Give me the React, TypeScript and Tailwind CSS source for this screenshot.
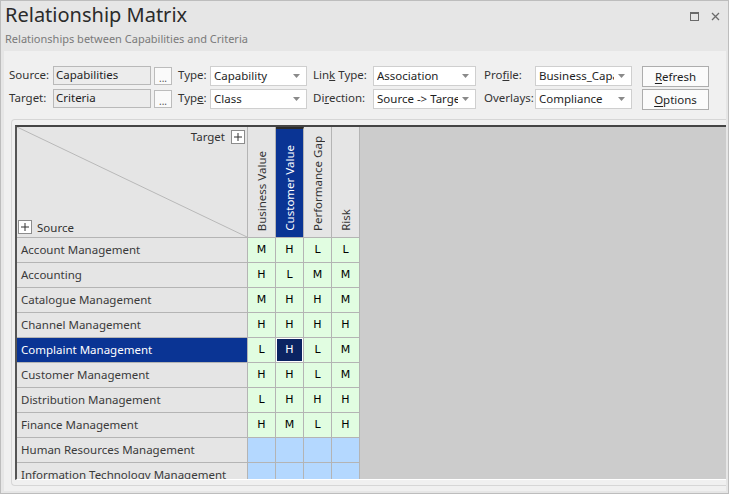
import React from "react";

type Row = { name: string; vals: string[] | null; selected?: boolean };

const rows: Row[] = [
  { name: "Account Management", vals: ["M", "H", "L", "L"] },
  { name: "Accounting", vals: ["H", "L", "M", "M"] },
  { name: "Catalogue Management", vals: ["M", "H", "H", "M"] },
  { name: "Channel Management", vals: ["H", "H", "H", "H"] },
  { name: "Complaint Management", vals: ["L", "H", "L", "M"], selected: true },
  { name: "Customer Management", vals: ["H", "H", "L", "M"] },
  { name: "Distribution Management", vals: ["L", "H", "H", "H"] },
  { name: "Finance Management", vals: ["H", "M", "L", "H"] },
  { name: "Human Resources Management", vals: null },
  { name: "Information Technology Management", vals: null },
];

const columns = ["Business Value", "Customer Value", "Performance Gap", "Risk"];

function Combo({ value, w }: { value: string; w: string }) {
  return (
    <div className={`${w} h-[20px] bg-white border border-[#cfcfcf] flex items-center pl-[3px] pr-[6px] gap-1`}>
      <span className="flex-1 overflow-hidden whitespace-nowrap text-[11.5px] text-[#1e1e1e]">{value}</span>
      <svg width="7" height="4" viewBox="0 0 7 4">
        <path d="M0 0h7L3.5 4z" fill="#8a8a8a" />
      </svg>
    </div>
  );
}

function Field({ value }: { value: string }) {
  return (
    <div className="w-[98px] h-[19px] bg-[#ececec] border border-[#b9b9b9] pl-[2px] text-[11.5px] leading-[15px] text-[#1e1e1e]">
      {value}
    </div>
  );
}

function Dots() {
  return (
    <div className="ml-[3px] w-[18px] h-[18px] mt-[1px] bg-[#fafafa] border border-[#bcbcbc] flex items-end justify-center text-[10px] leading-[12px] text-[#555]">
      ...
    </div>
  );
}

function Btn({ first, rest }: { first: string; rest: string }) {
  return (
    <div className="ml-[10px] w-[67px] h-[21px] bg-[#fbfbfb] border border-[#adadad] flex items-center justify-center text-[11.5px] text-[#1e1e1e]">
      <span className="underline underline-offset-2">{first}</span>
      {rest}
    </div>
  );
}

function Label({ w, children, ml }: { w: string; children: React.ReactNode; ml?: string }) {
  return <div className={`${w} ${ml ?? ""} text-[11.5px] text-[#333] whitespace-nowrap leading-[16px] pt-[1px]`}>{children}</div>;
}

function PlusBox() {
  return (
    <div className="w-[14px] h-[14px] bg-white border border-[#8c8c8c] flex items-center justify-center">
      <svg width="8" height="8" viewBox="0 0 8 8">
        <path d="M4 0v8M0 4h8" stroke="#333" strokeWidth="1" />
      </svg>
    </div>
  );
}

export default function App() {
  return (
    <div className="w-[729px] h-[494px] bg-[#e6e6e6] border border-[#bdbdbd] flex flex-col font-['Noto_Sans',sans-serif] overflow-hidden">
      {/* title */}
      <div className="relative h-[51px] px-[4px]">
        <div className="pt-[1px] text-[20px] leading-[26px] text-[#2b2b2b]">Relationship Matrix</div>
        <div className="mt-[4px] text-[11px] leading-[14px] text-[#7a7a7a]">Relationships between Capabilities and Criteria</div>
        <div className="absolute right-[8px] top-[11px] flex items-center gap-[12px]">
          <div className="w-[9px] h-[9px] border border-[#6a6a6a] border-t-2" />
          <svg width="9" height="9" viewBox="0 0 9 9">
            <path d="M1 1l7 7M8 1L1 8" stroke="#6a6a6a" strokeWidth="1.3" />
          </svg>
        </div>
      </div>

      {/* panel */}
      <div className="ml-[3px] mr-[2px] mb-[2px] flex-1 bg-[#f0f0f0] flex flex-col">
        <div className="pl-[5px] pt-[15px] flex flex-col gap-[2px]">
          <div className="flex items-start">
            <Label w="w-[44px]">Source:</Label>
            <Field value="Capabilities" />
            <Dots />
            <Label w="w-[32px]" ml="ml-[6px]">Type:</Label>
            <Combo value="Capability" w="w-[97px]" />
            <Label w="w-[60px]" ml="ml-[6px]">
              Lin<span className="underline">k</span> Type:
            </Label>
            <Combo value="Association" w="w-[103px]" />
            <Label w="w-[51px]" ml="ml-[8px]">
              Pro<span className="underline">f</span>ile:
            </Label>
            <Combo value="Business_Capa" w="w-[97px]" />
            <Btn first="R" rest="efresh" />
          </div>
          <div className="flex items-start">
            <Label w="w-[44px]">Target:</Label>
            <Field value="Criteria" />
            <Dots />
            <Label w="w-[32px]" ml="ml-[6px]">
              Typ<span className="underline">e</span>:
            </Label>
            <Combo value="Class" w="w-[97px]" />
            <Label w="w-[60px]" ml="ml-[6px]">
              Di<span className="underline">r</span>ection:
            </Label>
            <Combo value="Source -> Target" w="w-[103px]" />
            <Label w="w-[51px]" ml="ml-[8px]">Overlays:</Label>
            <Combo value="Compliance" w="w-[97px]" />
            <Btn first="O" rest="ptions" />
          </div>
        </div>

        {/* matrix container */}
        <div className="mt-[9px] ml-[7px] mb-[5px] flex-1 border border-r-0 border-[#d6d6d6] rounded-l-[4px] pl-[3px] pt-[5px] pb-[5px]">
          <div className="h-[355px] bg-[#cccccc] border-t-2 border-l-2 border-t-[#444] border-l-[#555] border-b border-b-white overflow-hidden">
            <div className="grid grid-cols-[231px_28px_28px_28px_28px] w-[343px]">
              {/* header */}
              <div className="relative h-[111px] bg-[#e5e5e5] border-r border-b border-[#b4b4b4]">
                <svg className="absolute inset-0" width="230" height="110" viewBox="0 0 230 110">
                  <path d="M0 0L230 110" stroke="#b8b8b8" strokeWidth="1" />
                </svg>
                <div className="absolute right-[2px] top-[1px] flex items-center gap-[6px]">
                  <span className="text-[11.5px] text-[#333]">Target</span>
                  <PlusBox />
                </div>
                <div className="absolute left-[1px] bottom-[1px] flex items-center gap-[5px]">
                  <PlusBox />
                  <span className="text-[11.5px] text-[#333]">Source</span>
                </div>
              </div>
              {columns.map((c, i) => (
                <div
                  key={c}
                  className={`h-[111px] border-r border-b border-[#b4b4b4] flex items-end justify-center pb-[6px] ${
                    i === 1 ? "bg-[#0a3494] text-white border-t-2 border-t-[#2a2a2a]" : "bg-[#e5e5e5] text-[#333]"
                  }`}
                >
                  <span className="[writing-mode:vertical-rl] rotate-180 text-[11.5px] leading-[14px] whitespace-nowrap">{c}</span>
                </div>
              ))}

              {/* rows */}
              {rows.map((r) => (
                <React.Fragment key={r.name}>
                  <div
                    className={`h-[25px] border-r border-b border-[#b4b4b4] pl-[4px] flex items-center text-[11.5px] whitespace-nowrap ${
                      r.selected ? "bg-[#0a3494] text-white" : "bg-[#e5e5e5] text-[#3a3a3a]"
                    }`}
                  >
                    {r.name}
                  </div>
                  {[0, 1, 2, 3].map((ci) => {
                    const v = r.vals ? r.vals[ci] : "";
                    const sel = r.selected && ci === 1;
                    return (
                      <div
                        key={ci}
                        className={`h-[25px] border-r border-b border-[#b4b4b4] flex items-center justify-center text-[11px] font-['DejaVu_Sans',sans-serif] ${
                          r.vals ? "bg-[#e1fde1] text-black" : "bg-[#b4d8ff]"
                        }`}
                      >
                        {sel ? (
                          <div className="w-full h-full bg-[#0b2462] border border-white text-white flex items-center justify-center">{v}</div>
                        ) : (
                          v
                        )}
                      </div>
                    );
                  })}
                </React.Fragment>
              ))}
            </div>
          </div>
        </div>
      </div>
    </div>
  );
}
